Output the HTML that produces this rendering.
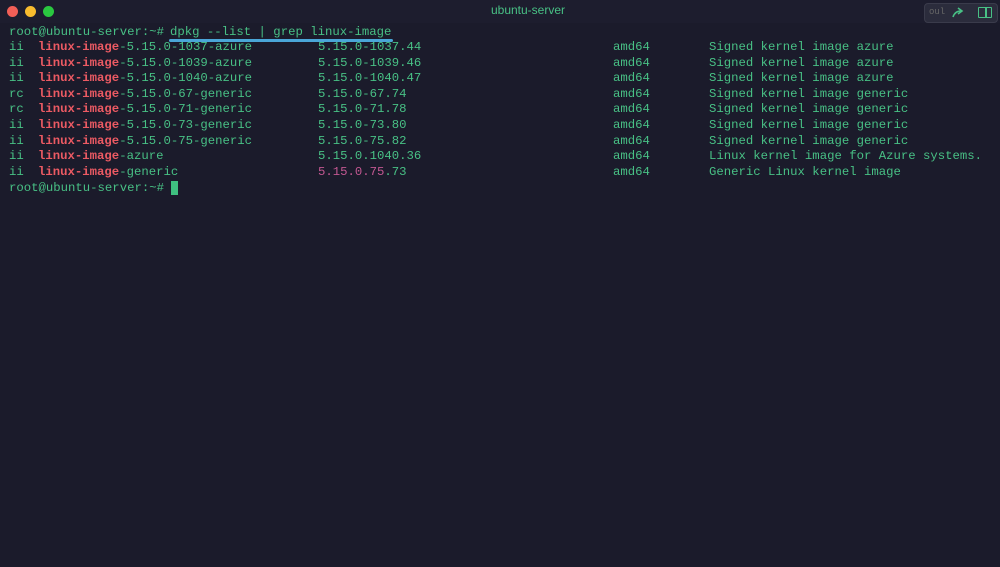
<!DOCTYPE html>
<html><head><style>
body{margin:0;width:1000px;height:567px;background:#1b1b2b;overflow:hidden;font-family:"Liberation Mono",monospace;font-size:12.3px;color:#48c085}
.bar{position:absolute;left:0;top:0;width:1000px;height:23px;background:#1d1d2e}
.dot{position:absolute;top:6px;width:11px;height:11px;border-radius:50%}
.t{position:absolute;white-space:pre;line-height:15.6px}
.r{color:#ec5a63;font-weight:bold}
.p{color:#c25791}
</style></head><body>
<div class="bar"></div>
<div class="dot" style="left:7px;background:#f25f57"></div>
<div class="dot" style="left:25px;background:#f8bc2e"></div>
<div class="dot" style="left:43px;background:#2ac840"></div>
<div class="t" style="left:0;width:1000px;top:3px;text-align:center;font-family:'Liberation Sans',sans-serif;font-size:12px;color:#48c085;padding-left:56px;box-sizing:border-box">ubuntu-server</div>
<div style="position:absolute;left:924px;top:3px;width:72px;height:18px;border-radius:4px;background:#2b2c3c;border:1px solid #3a3b4b"></div>
<div class="t" style="left:929px;top:5px;font-size:9px;color:#666">oul</div>
<svg style="position:absolute;left:952px;top:7px" width="14" height="11"><path d="M1 10 Q3 4 9 4 M6 1 L10 4 L6 7" stroke="#48c085" stroke-width="1.6" fill="none"/></svg>
<div style="position:absolute;left:978px;top:7px;width:12px;height:9px;border:1.5px solid #48c085;border-radius:1px"></div>
<div style="position:absolute;left:985px;top:7px;width:1.5px;height:11px;background:#48c085"></div>
<div class="t" style="left:9px;top:25px">root@ubuntu-server:~#</div>
<div class="t" style="left:170px;top:25px">dpkg --list | grep linux-image</div>
<div style="position:absolute;left:169px;top:39px;width:224px;height:3px;border-radius:2px;background:#4aa6d8"></div>
<div class="t" style="left:9px;top:40px">ii
ii
ii
rc
rc
ii
ii
ii
ii</div>
<div class="t" style="left:38px;top:40px"><span class="r">linux-image</span>-5.15.0-1037-azure
<span class="r">linux-image</span>-5.15.0-1039-azure
<span class="r">linux-image</span>-5.15.0-1040-azure
<span class="r">linux-image</span>-5.15.0-67-generic
<span class="r">linux-image</span>-5.15.0-71-generic
<span class="r">linux-image</span>-5.15.0-73-generic
<span class="r">linux-image</span>-5.15.0-75-generic
<span class="r">linux-image</span>-azure
<span class="r">linux-image</span>-generic</div>
<div class="t" style="left:318px;top:40px">5.15.0-1037.44
5.15.0-1039.46
5.15.0-1040.47
5.15.0-67.74
5.15.0-71.78
5.15.0-73.80
5.15.0-75.82
5.15.0.1040.36
<span class="p">5.15.0.75</span>.73</div>
<div class="t" style="left:613px;top:40px">amd64
amd64
amd64
amd64
amd64
amd64
amd64
amd64
amd64</div>
<div class="t" style="left:709px;top:40px">Signed kernel image azure
Signed kernel image azure
Signed kernel image azure
Signed kernel image generic
Signed kernel image generic
Signed kernel image generic
Signed kernel image generic
Linux kernel image for Azure systems.
Generic Linux kernel image</div>
<div class="t" style="left:9px;top:181px">root@ubuntu-server:~#</div>
<div style="position:absolute;left:171px;top:181px;width:7px;height:14px;background:#3fc080"></div>
</body></html>
